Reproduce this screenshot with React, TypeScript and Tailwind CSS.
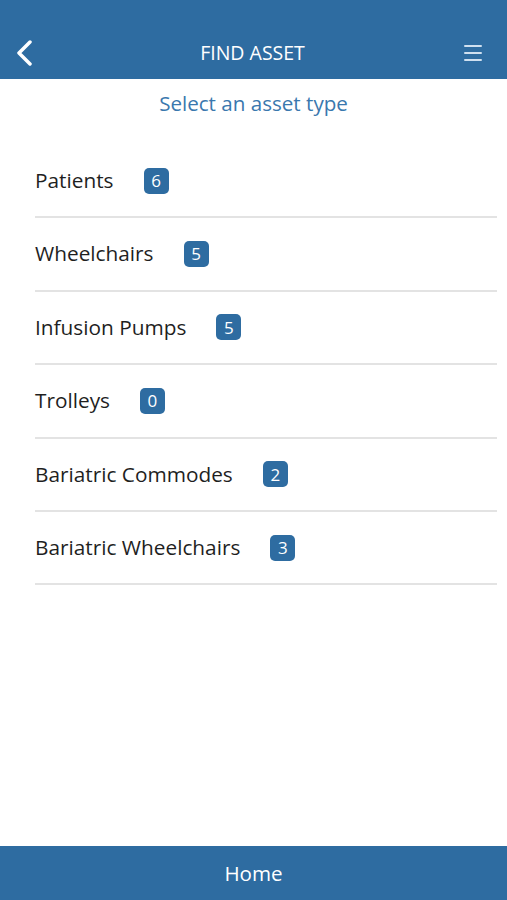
import React from "react";

const assets = [
  { name: "Patients", count: 6 },
  { name: "Wheelchairs", count: 5 },
  { name: "Infusion Pumps", count: 5 },
  { name: "Trolleys", count: 0 },
  { name: "Bariatric Commodes", count: 2 },
  { name: "Bariatric Wheelchairs", count: 3 },
];

export default function App() {
  return (
    <div
      className="flex flex-col h-[900px] w-[507px] bg-white"
      style={{ fontFamily: '"Open Sans", "Noto Sans", sans-serif' }}
    >
      <header className="h-[79px] bg-[#2e6ca1] flex items-center justify-between px-[15px] pt-[26px]">
        <button className="w-[20px] h-[26px] flex items-center">
          <svg width="18" height="26" viewBox="0 0 18 26" fill="none">
            <path d="M15 2 L4 13 L15 24" stroke="white" strokeWidth="3.5" strokeLinecap="round" strokeLinejoin="round" />
          </svg>
        </button>
        <h1 className="text-white text-[19.5px] ml-[6px]">FIND ASSET</h1>
        <button className="w-[20px] flex flex-col gap-[5px] mr-[8px]">
          <span className="block h-[2px] w-[18px] bg-[#cfe0f0] rounded" />
          <span className="block h-[2px] w-[18px] bg-[#cfe0f0] rounded" />
          <span className="block h-[2px] w-[18px] bg-[#cfe0f0] rounded" />
        </button>
      </header>

      <p className="text-center text-[#3a78ae] text-[20.6px] leading-[28px] pt-[10px] pb-[28px]">
        Select an asset type
      </p>

      <ul className="pl-[35px] pr-[10px]">
        {assets.map((a) => (
          <li
            key={a.name}
            className="h-[73.4px] flex items-center border-b-2 border-[#e3e3e3] text-[20.8px] text-[#1f1f1f]"
          >
            <span>{a.name}</span>
            <span className="ml-[30px] w-[25px] h-[26px] rounded-[5px] bg-[#2e6ca1] text-white text-[17px] flex items-center justify-center">
              {a.count}
            </span>
          </li>
        ))}
      </ul>

      <footer className="mt-auto h-[54px] bg-[#2e6ca1] flex items-center justify-center">
        <span className="text-white text-[20.6px]">Home</span>
      </footer>
    </div>
  );
}
